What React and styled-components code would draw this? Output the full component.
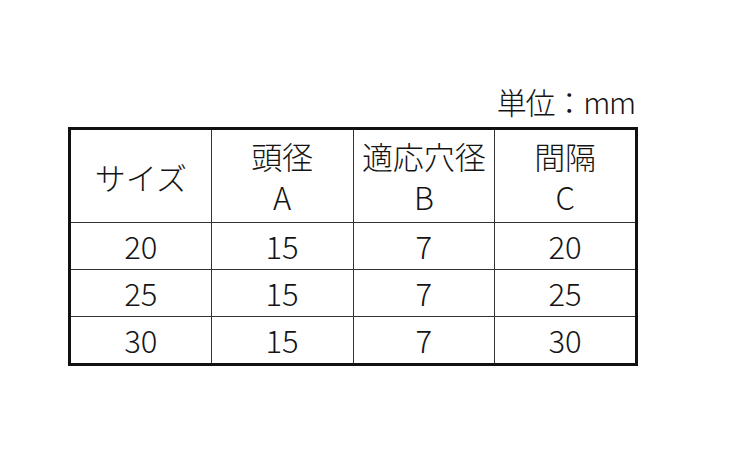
import React from 'react';
import styled, { createGlobalStyle } from 'styled-components';

const GlobalStyle = createGlobalStyle`
  html, body {
    margin: 0;
    padding: 0;
    background: #fff;
  }
  body {
    font-family: "Noto Sans CJK JP", "Noto Sans", sans-serif;
    color: #141414;
  }
`;

const Page = styled.div`
  width: 750px;
  height: 450px;
  padding: 82px 0 0 68px;
  box-sizing: border-box;
`;

const Wrap = styled.div`
  width: 570px;
  display: flex;
  flex-direction: column;
`;

const Unit = styled.div`
  align-self: flex-end;
  margin-right: 3px;
  font-size: 30px;
  line-height: 38px;
  font-weight: 300;
  height: 45px;
  letter-spacing: -1.2px;
`;

const Table = styled.table`
  width: 570px;
  border-collapse: collapse;
  border: 3px solid #111;
  table-layout: fixed;
`;

const Cell = styled.td`
  border: 1px solid #333;
  text-align: center;
  vertical-align: middle;
  padding: 0;
  height: ${(p) => (p.$head ? 92 : 46)}px;
  font-size: 31px;
  font-weight: 300;
  line-height: ${(p) => (p.$head ? 41 : 44)}px;
`;

const head = [
  ['サイズ'],
  ['頭径', 'A'],
  ['適応穴径', 'B'],
  ['間隔', 'C'],
];

const rows = [
  ['20', '15', '7', '20'],
  ['25', '15', '7', '25'],
  ['30', '15', '7', '30'],
];

export default function App() {
  return (
    <Page>
      <GlobalStyle />
      <Wrap>
        <Unit>単位：mm</Unit>
        <Table>
          <tbody>
            <tr>
              {head.map((h, i) => (
                <Cell key={i} $head>
                  {h.map((line, j) => (
                    <div key={j}>{line}</div>
                  ))}
                </Cell>
              ))}
            </tr>
            {rows.map((r, i) => (
              <tr key={i}>
                {r.map((v, j) => (
                  <Cell key={j}>{v}</Cell>
                ))}
              </tr>
            ))}
          </tbody>
        </Table>
      </Wrap>
    </Page>
  );
}
